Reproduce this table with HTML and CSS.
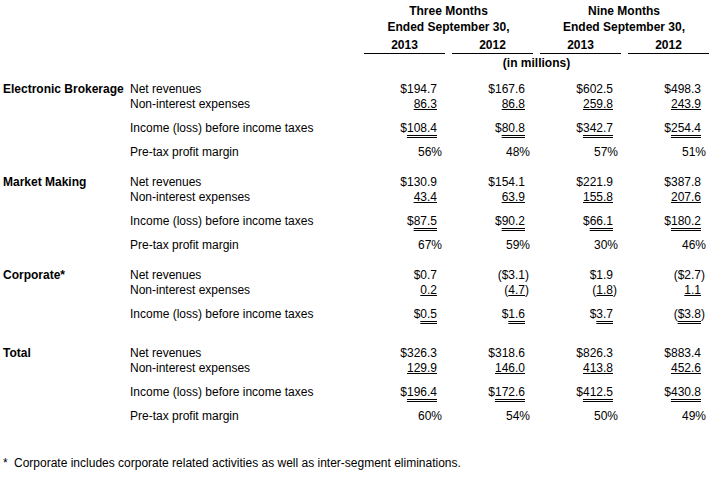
FILE: index.html
```html
<!DOCTYPE html>
<html>
<head>
<meta charset="utf-8">
<link rel="stylesheet" href="styles.css">
</head>
<body>
<div class="page">
  <div class="head">
    <div class="row h1">
      <div class="grp g1">Three Months</div>
      <div class="grp g2">Nine Months</div>
    </div>
    <div class="row h2">
      <div class="grp g1">Ended September 30,</div>
      <div class="grp g2">Ended September 30,</div>
    </div>
    <div class="row h3">
      <div class="yr y1">2013</div>
      <div class="yr y2">2012</div>
      <div class="yr y3">2013</div>
      <div class="yr y4">2012</div>
    </div>
    <div class="row h4">
      <div class="units">(in millions)</div>
    </div>
  </div>

  <div class="seg">
    <div class="row">
      <div class="lbl">Electronic Brokerage</div>
      <div class="desc">Net revenues</div>
      <div class="num">$194.7</div>
      <div class="num">$167.6</div>
      <div class="num">$602.5</div>
      <div class="num last">$498.3</div>
    </div>
    <div class="row">
      <div class="lbl"></div>
      <div class="desc">Non-interest expenses</div>
      <div class="num"><span class="u">86.3</span></div>
      <div class="num"><span class="u">86.8</span></div>
      <div class="num"><span class="u">259.8</span></div>
      <div class="num last"><span class="u">243.9</span></div>
    </div>
    <div class="row sp">
      <div class="lbl"></div>
      <div class="desc">Income (loss) before income taxes</div>
      <div class="num">$<span class="uu">108.4</span></div>
      <div class="num">$<span class="uu">80.8</span></div>
      <div class="num">$<span class="uu">342.7</span></div>
      <div class="num last">$<span class="uu">254.4</span></div>
    </div>
    <div class="row sp">
      <div class="lbl"></div>
      <div class="desc">Pre-tax profit margin</div>
      <div class="num pct">56%</div>
      <div class="num pct">48%</div>
      <div class="num pct">57%</div>
      <div class="num pct last">51%</div>
    </div>
  </div>

  <div class="seg">
    <div class="row">
      <div class="lbl">Market Making</div>
      <div class="desc">Net revenues</div>
      <div class="num">$130.9</div>
      <div class="num">$154.1</div>
      <div class="num">$221.9</div>
      <div class="num last">$387.8</div>
    </div>
    <div class="row">
      <div class="lbl"></div>
      <div class="desc">Non-interest expenses</div>
      <div class="num"><span class="u">43.4</span></div>
      <div class="num"><span class="u">63.9</span></div>
      <div class="num"><span class="u">155.8</span></div>
      <div class="num last"><span class="u">207.6</span></div>
    </div>
    <div class="row sp">
      <div class="lbl"></div>
      <div class="desc">Income (loss) before income taxes</div>
      <div class="num">$<span class="uu">87.5</span></div>
      <div class="num">$<span class="uu">90.2</span></div>
      <div class="num">$<span class="uu">66.1</span></div>
      <div class="num last">$<span class="uu">180.2</span></div>
    </div>
    <div class="row sp">
      <div class="lbl"></div>
      <div class="desc">Pre-tax profit margin</div>
      <div class="num pct">67%</div>
      <div class="num pct">59%</div>
      <div class="num pct">30%</div>
      <div class="num pct last">46%</div>
    </div>
  </div>

  <div class="seg short">
    <div class="row">
      <div class="lbl">Corporate*</div>
      <div class="desc">Net revenues</div>
      <div class="num">$0.7</div>
      <div class="num">($3.1<span class="cp">)</span></div>
      <div class="num">$1.9</div>
      <div class="num last">($2.7<span class="cp">)</span></div>
    </div>
    <div class="row">
      <div class="lbl"></div>
      <div class="desc">Non-interest expenses</div>
      <div class="num"><span class="u">0.2</span></div>
      <div class="num">(<span class="u">4.7</span><span class="cp">)</span></div>
      <div class="num">(<span class="u">1.8</span><span class="cp">)</span></div>
      <div class="num last"><span class="u">1.1</span></div>
    </div>
    <div class="row sp">
      <div class="lbl"></div>
      <div class="desc">Income (loss) before income taxes</div>
      <div class="num">$<span class="uu">0.5</span></div>
      <div class="num">$<span class="uu">1.6</span></div>
      <div class="num">$<span class="uu">3.7</span></div>
      <div class="num last">(<span class="uu">$3.8</span><span class="cp">)</span></div>
    </div>
  </div>

  <div class="seg">
    <div class="row">
      <div class="lbl">Total</div>
      <div class="desc">Net revenues</div>
      <div class="num">$326.3</div>
      <div class="num">$318.6</div>
      <div class="num">$826.3</div>
      <div class="num last">$883.4</div>
    </div>
    <div class="row">
      <div class="lbl"></div>
      <div class="desc">Non-interest expenses</div>
      <div class="num"><span class="u">129.9</span></div>
      <div class="num"><span class="u">146.0</span></div>
      <div class="num"><span class="u">413.8</span></div>
      <div class="num last"><span class="u">452.6</span></div>
    </div>
    <div class="row sp">
      <div class="lbl"></div>
      <div class="desc">Income (loss) before income taxes</div>
      <div class="num">$<span class="uu">196.4</span></div>
      <div class="num">$<span class="uu">172.6</span></div>
      <div class="num">$<span class="uu">412.5</span></div>
      <div class="num last">$<span class="uu">430.8</span></div>
    </div>
    <div class="row sp">
      <div class="lbl"></div>
      <div class="desc">Pre-tax profit margin</div>
      <div class="num pct">60%</div>
      <div class="num pct">54%</div>
      <div class="num pct">50%</div>
      <div class="num pct last">49%</div>
    </div>
  </div>

  <p class="note"><span class="star">*</span>Corporate includes corporate related activities as well as inter-segment eliminations.</p>
</div>
</body>
</html>
```

FILE: styles.css
```css
html, body {
  margin: 0;
  padding: 0;
  background: #fff;
  overflow: hidden;
}
.page {
  width: 715px;
  padding: 4px 0 0 3px;
  box-sizing: border-box;
  font-family: "Liberation Sans", Arial, sans-serif;
  font-size: 12px;
  color: #000;
}
.row {
  display: grid;
  grid-template-columns: 127px 234px 88px 88px 88px 87px;
  height: 15px;
  line-height: 15px;
  white-space: nowrap;
}
.head {
  font-weight: bold;
  margin-bottom: 11px;
}
.h2 { margin-top: 1px; }
.h3 { margin-top: 3px; }
.h4 { margin-top: 3px; }
.grp {
  text-align: center;
  padding-right: 7px;
}
.g1 { grid-column: 3 / span 2; }
.g2 { grid-column: 5 / span 2; }
.yr {
  text-align: center;
  margin-right: 7px;
  border-bottom: 1px solid #000;
}
.y1 { grid-column: 3; }
.y2 { grid-column: 4; }
.y3 { grid-column: 5; }
.y4 { grid-column: 6; margin-right: 6px; }
.units {
  grid-column: 3 / span 4;
  text-align: center;
  padding-right: 6px;
}
.seg { margin-bottom: 15px; }
.seg.short { margin-bottom: 24px; }
.sp { margin-top: 9px; }
.lbl { font-weight: bold; }
.num {
  text-align: right;
  padding-right: 15px;
}
.num.last { padding-right: 14px; }
.num.pct { padding-right: 10px; }
.num.pct.last { padding-right: 9px; }
.cp { margin-right: -4px; }
.u {
  text-decoration: underline;
  text-decoration-thickness: 1px;
  text-underline-offset: 1px;
  text-decoration-skip-ink: none;
}
.uu {
  text-decoration: underline double;
  text-decoration-thickness: 1px;
  text-underline-offset: 3px;
  text-decoration-skip-ink: none;
}
.note {
  margin: 32px 0 0 0;
  line-height: 15px;
  white-space: nowrap;
}
.star {
  display: inline-block;
  width: 11px;
}
```
